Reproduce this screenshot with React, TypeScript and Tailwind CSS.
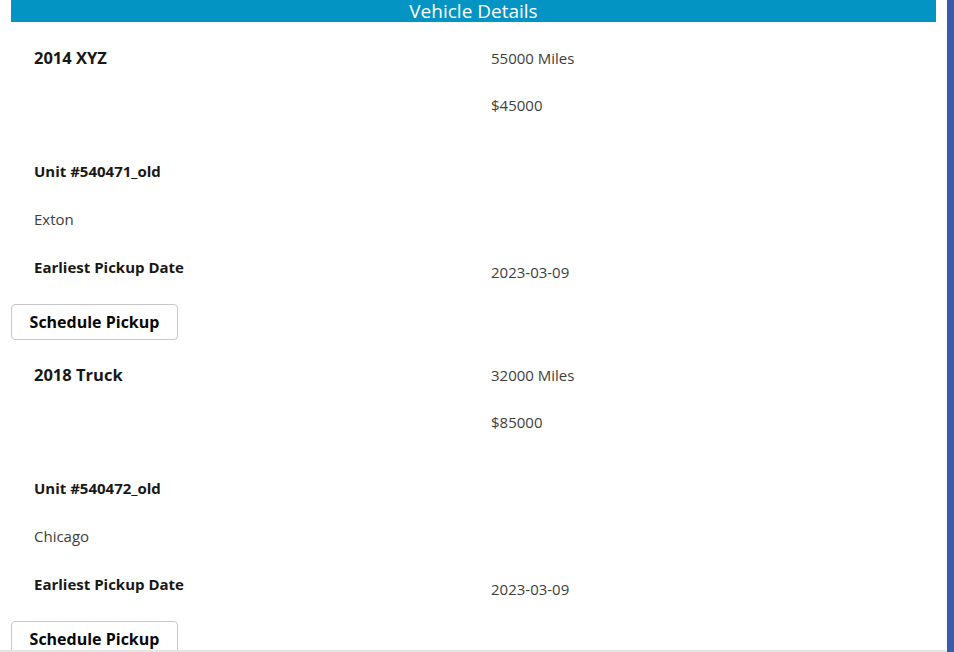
import React from "react";

type Vehicle = {
  name: string;
  miles: string;
  price: string;
  unit: string;
  location: string;
  date: string;
};

const vehicles: Vehicle[] = [
  { name: "2014 XYZ", miles: "55000 Miles", price: "$45000", unit: "Unit #540471_old", location: "Exton", date: "2023-03-09" },
  { name: "2018 Truck", miles: "32000 Miles", price: "$85000", unit: "Unit #540472_old", location: "Chicago", date: "2023-03-09" },
];

function Block({ v }: { v: Vehicle }) {
  return (
    <div className="flex shrink-0 flex-col pt-[25px]">
      <div className="flex h-[20px] items-center">
        <div className="w-[480px] pl-[23px] text-[16.5px] font-bold text-[#181818]">{v.name}</div>
        <div className="text-[15px] text-[#3e3e3c]">{v.miles}</div>
      </div>
      <div className="mt-[27px] flex h-[20px] items-center">
        <div className="w-[480px]" />
        <div className="text-[15px] text-[#3e3e3c]">{v.price}</div>
      </div>
      <div className="mt-[46px] flex h-[20px] items-center pl-[23px] text-[15px] font-bold text-[#181818]">{v.unit}</div>
      <div className="mt-[28px] flex h-[20px] items-center pl-[23px] text-[15px] text-[#3e3e3c]">{v.location}</div>
      <div className="mt-[28px] flex items-start">
        <div className="flex h-[20px] w-[480px] items-center pl-[23px] text-[15px] font-bold text-[#181818]">Earliest Pickup Date</div>
        <div className="mt-[5px] flex h-[20px] items-center text-[15px] text-[#3e3e3c]">{v.date}</div>
      </div>
      <div className="mt-[22px]">
        <button className="flex h-[36px] w-[167px] items-center justify-center rounded-[4px] border border-[#c9c9c9] bg-white text-[16px] font-bold text-[#080707]">
          Schedule Pickup
        </button>
      </div>
    </div>
  );
}

export default function App() {
  return (
    <div
      className="flex h-[652px] w-[954px] overflow-hidden bg-white"
      style={{ fontFamily: '"Open Sans", "Noto Sans", sans-serif' }}
    >
      <div className="flex w-[947px] flex-col">
        <div className="flex h-[650px] flex-col overflow-hidden">
          <div className="flex w-[936px] shrink-0 flex-col pl-[11px]">
            <div className="flex h-[22px] shrink-0 items-center justify-center bg-[#0494c4] text-[19px] leading-[22px] text-white">
              Vehicle Details
            </div>
            <div className="h-[1px] shrink-0" />
            {vehicles.map((v) => (
              <Block key={v.unit} v={v} />
            ))}
          </div>
        </div>
        <div className="h-[2px] bg-[#e6e6e6]" />
      </div>
      <div className="w-[7px] bg-[#3b5aa8]" />
    </div>
  );
}
